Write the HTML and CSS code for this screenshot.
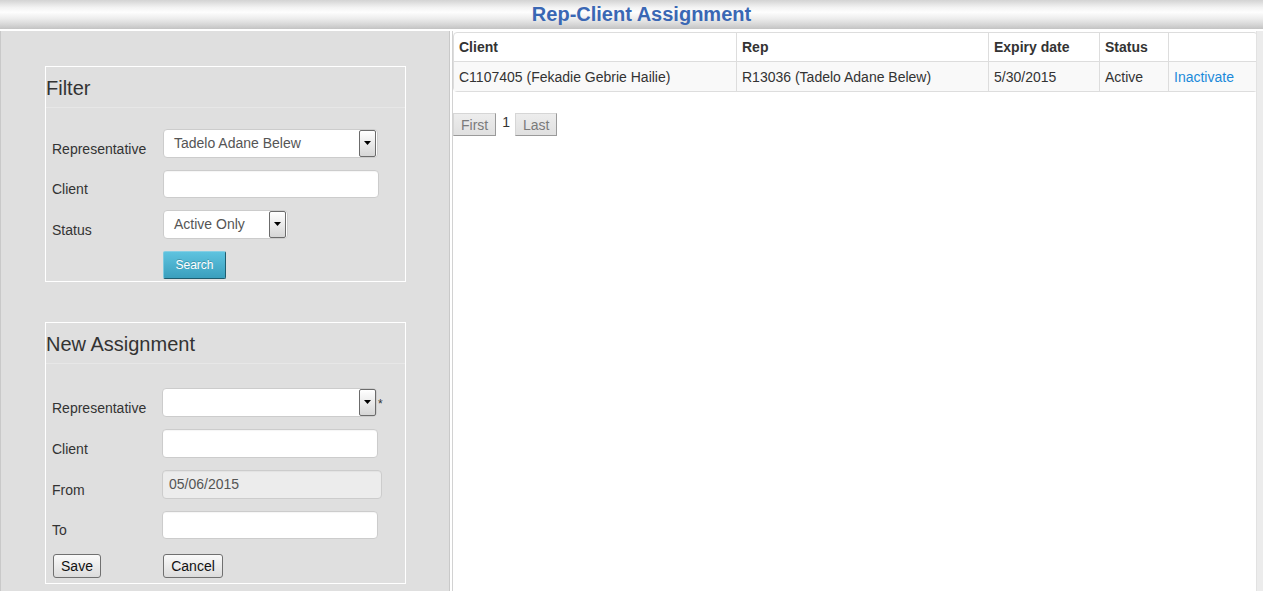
FILE: index.html
```html
<!DOCTYPE html>
<html>
<head>
<meta charset="utf-8">
<title>Rep-Client Assignment</title>
<link rel="stylesheet" href="styles.css">
</head>
<body>
<header class="topbar"><h1 class="title">Rep-Client Assignment</h1></header>
<div class="main">
  <aside class="sidebar">
    <section class="box box-filter">
      <div class="box-title">Filter</div>
      <div class="form form-filter">
        <label class="lbl">Representative</label>
        <div class="ctl">
          <div class="select sel-rep"><span class="select-text">Tadelo Adane Belew</span><span class="select-btn"><svg width="7" height="4" viewBox="0 0 7 4"><polygon points="0,0 7,0 3.5,4" fill="#000"/></svg></span></div>
        </div>
        <label class="lbl">Client</label>
        <div class="ctl"><div class="input in-fclient"></div></div>
        <label class="lbl">Status</label>
        <div class="ctl">
          <div class="select sel-status"><span class="select-text">Active Only</span><span class="select-btn"><svg width="7" height="4" viewBox="0 0 7 4"><polygon points="0,0 7,0 3.5,4" fill="#000"/></svg></span></div>
        </div>
        <span></span>
        <div class="ctl"><button class="btn-search">Search</button></div>
      </div>
    </section>

    <section class="box box-new">
      <div class="box-title">New Assignment</div>
      <div class="form form-new">
        <label class="lbl">Representative</label>
        <div class="ctl ctl-req">
          <div class="select sel-newrep"><span class="select-text"></span><span class="select-btn"><svg width="7" height="4" viewBox="0 0 7 4"><polygon points="0,0 7,0 3.5,4" fill="#000"/></svg></span></div>
          <span class="req">*</span>
        </div>
        <label class="lbl">Client</label>
        <div class="ctl"><div class="input in-nclient"></div></div>
        <label class="lbl">From</label>
        <div class="ctl"><div class="input in-from">05/06/2015</div></div>
        <label class="lbl">To</label>
        <div class="ctl"><div class="input in-to"></div></div>
        <div class="btn-cell"><button class="btn btn-save">Save</button></div>
        <div class="btn-cell btn-cell-r"><button class="btn btn-cancel">Cancel</button></div>
      </div>
    </section>
  </aside>

  <section class="content">
    <table class="grid">
      <colgroup>
        <col style="width:282px"><col style="width:252px"><col style="width:111px"><col style="width:69px"><col style="width:89px">
      </colgroup>
      <thead>
        <tr><th>Client</th><th>Rep</th><th>Expiry date</th><th>Status</th><th></th></tr>
      </thead>
      <tbody>
        <tr><td>C1107405 (Fekadie Gebrie Hailie)</td><td>R13036 (Tadelo Adane Belew)</td><td>5/30/2015</td><td>Active</td><td><a class="link" href="#">Inactivate</a></td></tr>
      </tbody>
    </table>
    <div class="pager">
      <button class="pbtn">First</button>
      <span class="pnum">1</span>
      <button class="pbtn">Last</button>
    </div>
  </section>
  <div class="gutter"></div>
</div>
</body>
</html>
```
FILE: styles.css
```css
html, body {
  margin: 0;
  padding: 0;
  height: 100%;
  overflow: hidden;
}
body {
  font-family: "Liberation Sans", Arial, sans-serif;
  font-size: 14px;
  color: #333;
  background: #fff;
}
.topbar {
  height: 29px;
  border-bottom: 2px solid #fff;
  background: linear-gradient(#d3d3d3 0%, #f2f2f2 25%, #fefefe 42%, #ececec 65%, #d6d6d6 85%, #c3c3c3 100%);
  display: flex;
  justify-content: center;
  align-items: center;
}
.title {
  margin: 0;
  font-size: 20px;
  font-weight: bold;
  color: #3a67b4;
  line-height: 29px;
  padding-left: 20px;
}
.main {
  display: flex;
  height: calc(100vh - 31px);
}
.sidebar {
  width: 450px;
  flex: none;
  box-sizing: border-box;
  background: #dfdfdf;
  border-left: 1px solid #c9c9c9;
  border-right: 1px solid #c9c9c9;
  margin-right: 2px;
  padding-top: 35px;
  padding-left: 44px;
}
.box {
  width: 359px;
  border: 1px solid #fff;
}
.box-new {
  margin-top: 40px;
}
.box-title {
  height: 40px;
  line-height: 42px;
  font-size: 20px;
  color: #333;
  border-bottom: 1px solid #e7e7e7;
}
.form {
  display: grid;
  row-gap: 12px;
  padding-left: 6px;
}
.form-filter {
  grid-template-columns: 111px 1fr;
  padding-top: 21px;
  padding-bottom: 2px;
}
.form-new {
  grid-template-columns: 110px 1fr;
  padding-top: 24px;
  padding-bottom: 5px;
}
.lbl {
  align-self: end;
  line-height: 18px;
  color: #333;
}
.ctl {
  display: flex;
  align-items: flex-start;
}
.select {
  display: flex;
  height: 29px;
  box-sizing: border-box;
  background: #fff;
  border: 1px solid #ccc;
  border-radius: 4px;
}
.sel-rep { width: 215px; }
.sel-status { width: 125px; }
.sel-newrep { width: 215px; }
.select-text {
  flex: 1;
  padding-left: 10px;
  line-height: 26px;
  color: #555;
}
.select-btn {
  width: 17px;
  box-sizing: border-box;
  border: 1px solid #6b6b6b;
  border-radius: 2px;
  background: linear-gradient(#ffffff, #d6d6d6);
  display: flex;
  align-items: center;
  justify-content: center;
  padding-bottom: 2px;
}
.sel-rep .select-btn, .sel-status .select-btn {
  margin-right: 1px;
}
.req {
  font-size: 12px;
  line-height: 12px;
  margin-top: 10px;
  margin-left: 1px;
  color: #333;
}
.input {
  height: 29px;
  box-sizing: border-box;
  background: #fff;
  border: 1px solid #ccc;
  border-radius: 4px;
  box-shadow: inset 0 1px 1px rgba(0,0,0,0.04);
}
.in-fclient { width: 216px; height: 28px; }
.in-nclient { width: 216px; }
.in-from {
  width: 220px;
  background: #ececec;
  color: #555;
  padding-left: 6px;
  line-height: 26px;
}
.in-to { width: 216px; height: 28px; }
.btn-search {
  width: 63px;
  height: 28px;
  padding: 0;
  font-family: "Liberation Sans", Arial, sans-serif;
  font-size: 12px;
  color: #fff;
  text-shadow: 0 -1px 0 rgba(0,0,0,0.2);
  background: linear-gradient(#5ec3df, #3a9fbd);
  border: 1px solid;
  border-color: #86cfe4 #1e5c6e #1e5c6e #7cc9df;
  border-radius: 2px;
}
.btn-cell {
  margin-top: 3px;
  margin-left: 1px;
}
.btn {
  height: 24px;
  padding: 0;
  font-family: "Liberation Sans", Arial, sans-serif;
  font-size: 14px;
  color: #111;
  background: linear-gradient(#fafafa, #dcdcdc);
  border: 1px solid #707070;
  border-radius: 3px;
}
.btn-save { width: 48px; }
.btn-cancel { width: 60px; }
.content {
  flex: 1;
  min-width: 0;
  border-left: 1px solid #d2d2d2;
  padding-top: 1px;
}
.grid {
  width: 100%;
  table-layout: fixed;
  border-collapse: separate;
  border-spacing: 0;
  border: 1px solid #ddd;
  border-radius: 4px;
}
.grid th, .grid td {
  padding: 0 5px;
  text-align: left;
  border-left: 1px solid #ddd;
  white-space: nowrap;
  overflow: hidden;
}
.grid th:first-child, .grid td:first-child {
  border-left: none;
}
.grid th {
  height: 28px;
  font-weight: bold;
  color: #333;
}
.grid td {
  height: 29px;
  border-top: 1px solid #ddd;
  background: #f9f9f9;
  color: #333;
}
.link {
  color: #1b8ad9;
  text-decoration: none;
}
.pager {
  display: flex;
  align-items: flex-start;
  margin-top: 21px;
}
.pbtn {
  height: 23px;
  padding: 0 7px;
  font-family: "Liberation Sans", Arial, sans-serif;
  font-size: 14px;
  color: #7a7a7a;
  background: linear-gradient(#ededed, #e0e0e0);
  border: 1px solid;
  border-color: #d6d6d6 #9a9a9a #9a9a9a #d6d6d6;
}
.pnum {
  margin: 0 5px 0 6px;
  line-height: 18px;
  color: #333;
}
.gutter {
  width: 6px;
  flex: none;
  background: #ececec;
  border-left: 1px solid #e2e2e2;
}
```
